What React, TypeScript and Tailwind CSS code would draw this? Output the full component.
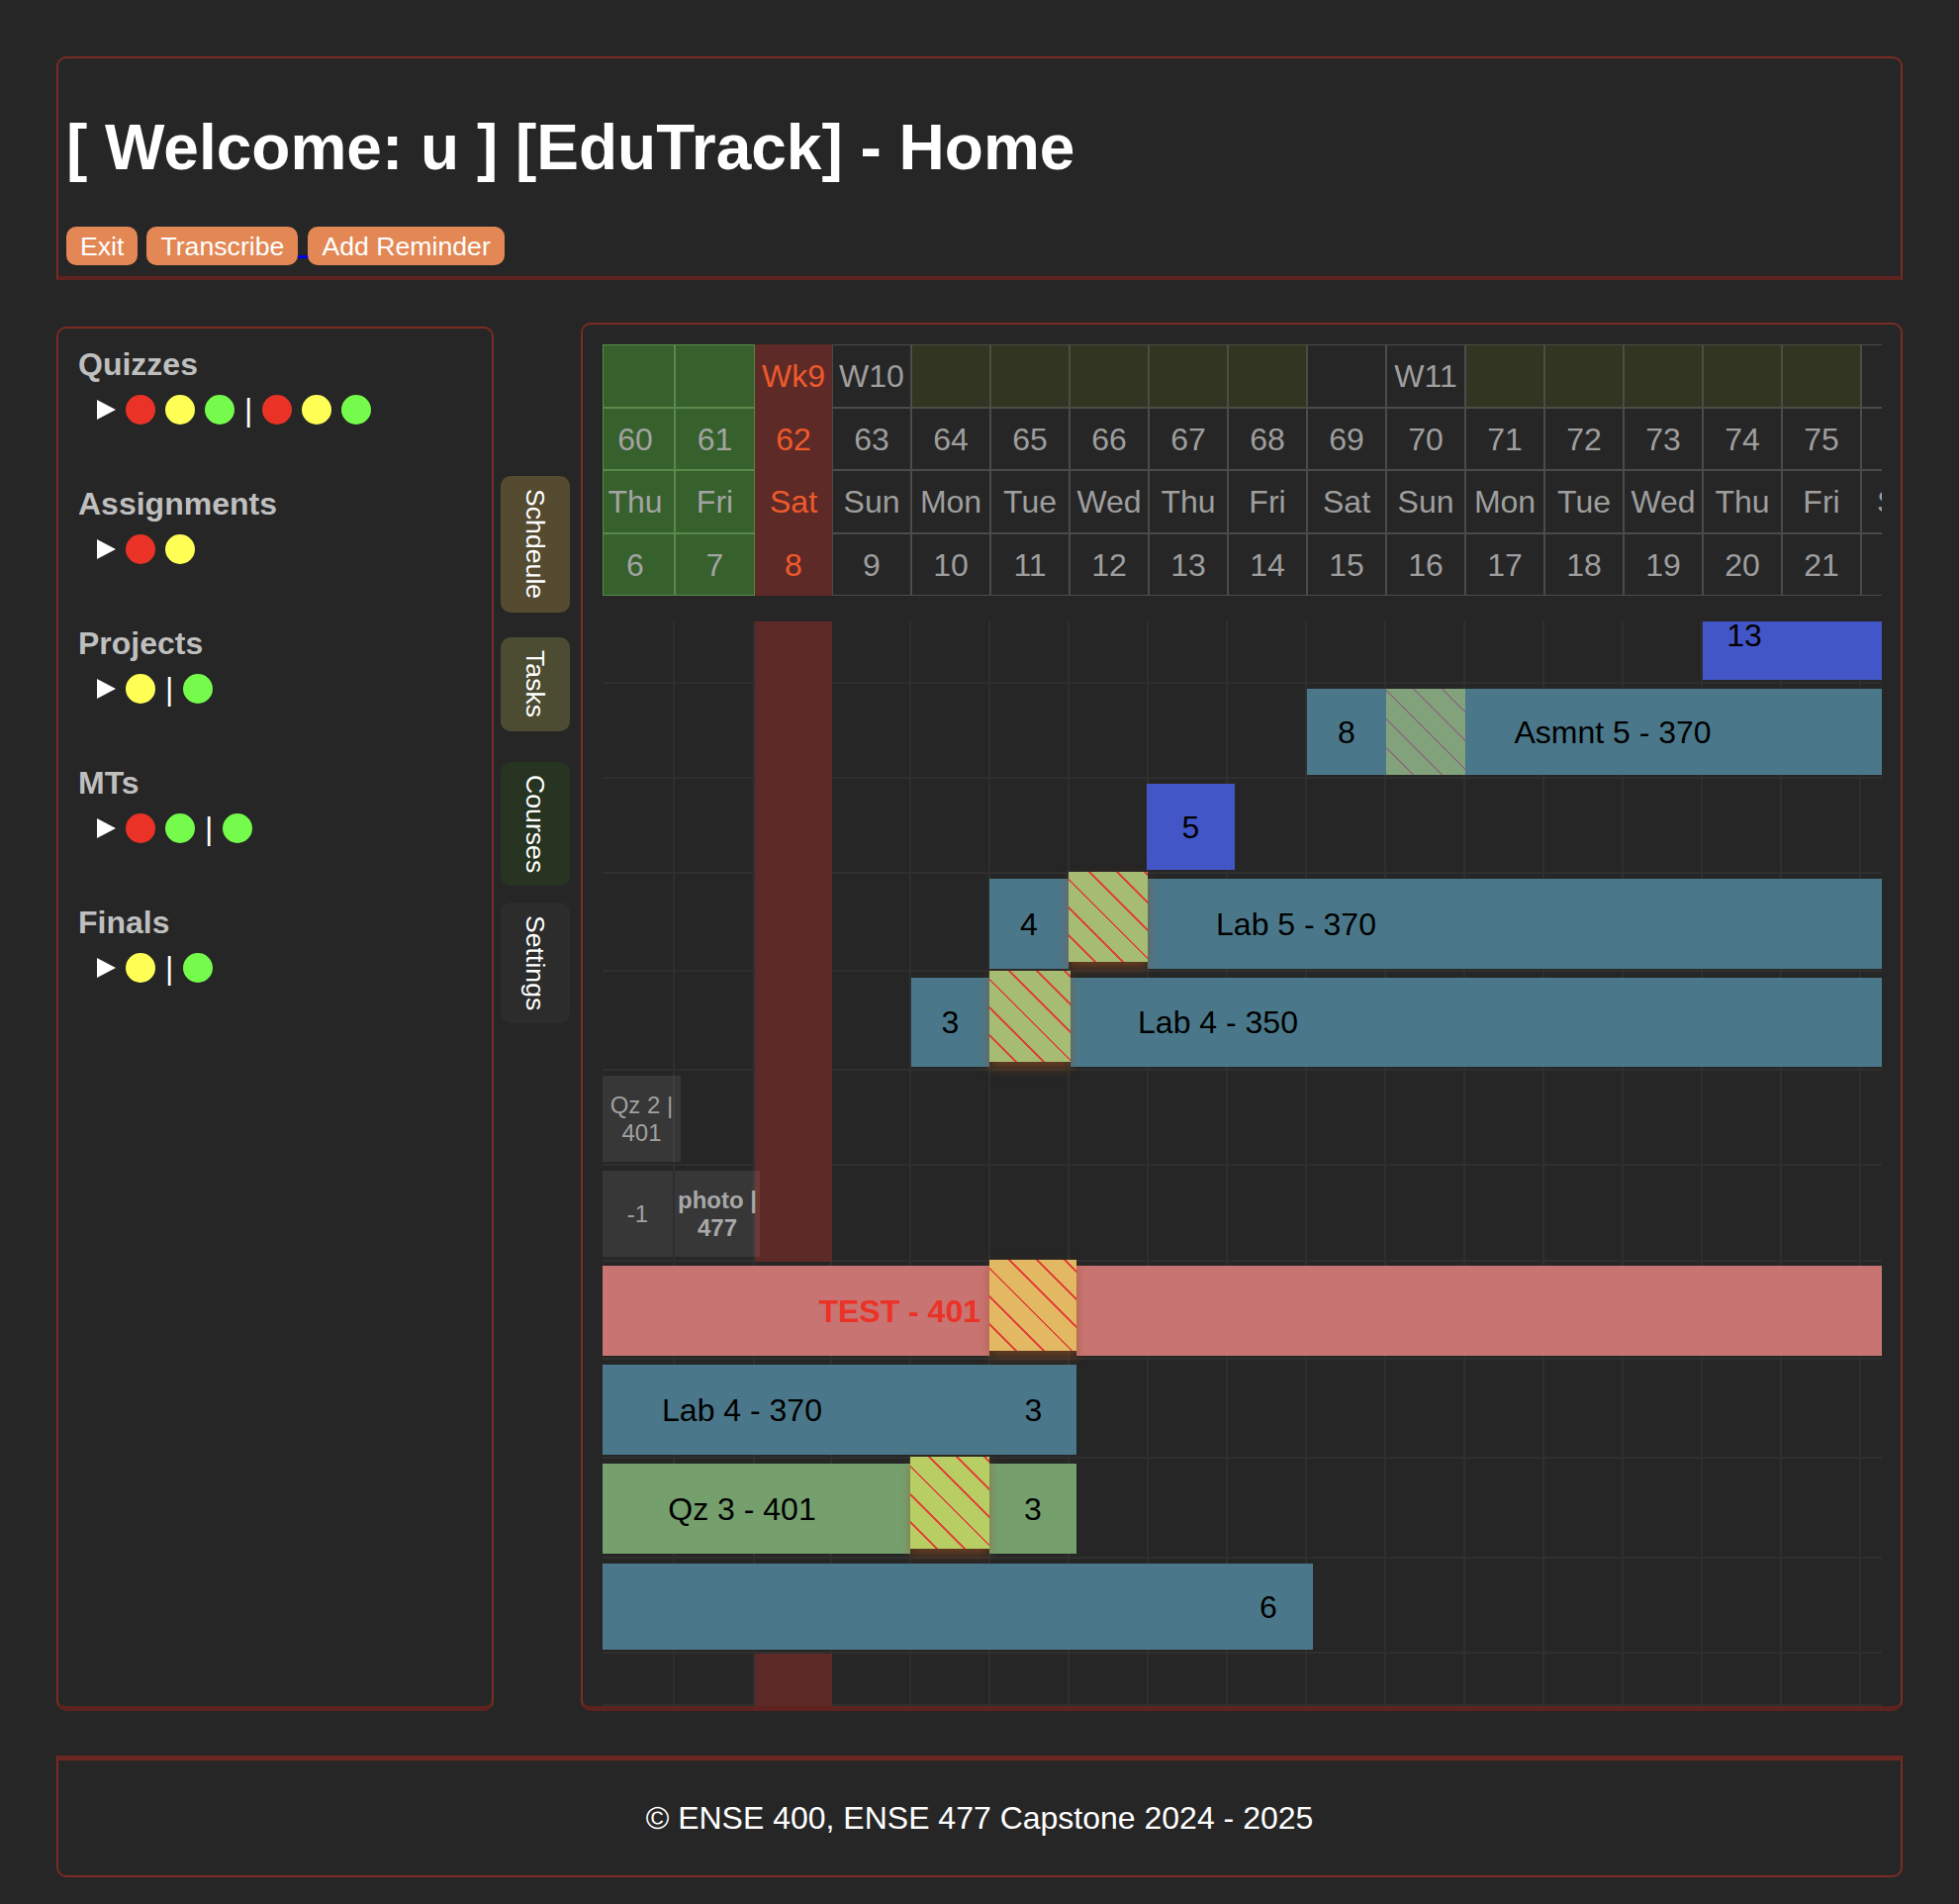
import React from 'react';

type Kind = 'green' | 'red' | 'dark' | 'olive';

// column widths of the calendar strip, first three are a bit off in the original
const COL_W = [
  'w-[73px] pr-[7px]', 'w-[81px]', 'w-[78px]',
  'w-[80px]', 'w-[80px]', 'w-[80px]', 'w-[80px]', 'w-[80px]', 'w-[80px]', 'w-[80px]',
  'w-[80px]', 'w-[80px]', 'w-[80px]', 'w-[80px]', 'w-[80px]', 'w-[80px]', 'w-[80px]',
];

const cellKind: Record<Kind, string> = {
  green: 'bg-[#36602c] border-[#5a8a4b] text-[#a3a3a3]',
  red: 'bg-[#5e2a27] border-[#5e2a27] text-[#ee5a2c]',
  dark: 'bg-[#262626] border-[#4b4b4b] text-[#9e9e9e]',
  olive: 'bg-[#313522] border-[#4c4e40] text-[#9e9e9e]',
};

const weekKinds: Kind[] = ['green', 'green', 'red', 'dark', 'olive', 'olive', 'olive', 'olive', 'olive', 'dark', 'dark', 'olive', 'olive', 'olive', 'olive', 'olive', 'dark'];
const weekText = ['', '', 'Wk9', 'W10', '', '', '', '', '', '', 'W11', '', '', '', '', '', ''];
const dayKinds: Kind[] = ['green', 'green', 'red', 'dark', 'dark', 'dark', 'dark', 'dark', 'dark', 'dark', 'dark', 'dark', 'dark', 'dark', 'dark', 'dark', 'dark'];
const nums = [60, 61, 62, 63, 64, 65, 66, 67, 68, 69, 70, 71, 72, 73, 74, 75, 76];
const days = ['Thu', 'Fri', 'Sat', 'Sun', 'Mon', 'Tue', 'Wed', 'Thu', 'Fri', 'Sat', 'Sun', 'Mon', 'Tue', 'Wed', 'Thu', 'Fri', 'Sat'];
const dates = [6, 7, 8, 9, 10, 11, 12, 13, 14, 15, 16, 17, 18, 19, 20, 21, 22];

const labHatch = 'bg-[repeating-linear-gradient(45deg,#a6bc73_0px,#a6bc73_18px,#d9453b_18px,#d9453b_20px)]';
const asmntHatch = 'bg-[repeating-linear-gradient(45deg,#82a27b_0px,#82a27b_19px,#8a6c7c_19px,#8a6c7c_20.5px)]';
const testHatch = 'bg-[repeating-linear-gradient(45deg,#e3b862_0px,#e3b862_18px,#e2443a_18px,#e2443a_20px)]';
const qzHatch = 'bg-[repeating-linear-gradient(45deg,#b8cd63_0px,#b8cd63_18px,#e0473b_18px,#e0473b_20px)]';
const glow = 'shadow-[0_6px_10px_rgba(160,80,30,0.55)]';

const dotColor = {
  r: 'bg-[#ea3326]',
  y: 'bg-[#ffff55]',
  g: 'bg-[#75fb4c]',
};

const sections: { title: string; marks: ('r' | 'y' | 'g' | '|')[] }[] = [
  { title: 'Quizzes', marks: ['r', 'y', 'g', '|', 'r', 'y', 'g'] },
  { title: 'Assignments', marks: ['r', 'y'] },
  { title: 'Projects', marks: ['y', '|', 'g'] },
  { title: 'MTs', marks: ['r', 'g', '|', 'g'] },
  { title: 'Finals', marks: ['y', '|', 'g'] },
];

function HeadRow({ kinds, values, h }: { kinds: Kind[]; values: (string | number)[]; h: string }) {
  return (
    <div className={`flex ${h}`}>
      {values.map((v, i) => (
        <div
          key={i}
          className={`${COL_W[i]} shrink-0 border-[1.5px] flex items-center justify-center text-[32px] ${cellKind[kinds[i]]}`}
        >
          {v}
        </div>
      ))}
    </div>
  );
}

function GridRow({ h, red, children }: { h: string; red?: boolean; children?: React.ReactNode }) {
  return (
    <div className={`relative ${h}`}>
      <div className="absolute inset-0 flex">
        {COL_W.map((w, i) => (
          <div
            key={i}
            className={`${w} shrink-0 h-full border-r-2 border-b-2 ${
              i === 2 && red ? 'bg-[#5e2a27] border-[#5e2a27]' : 'border-[#2f2f2f]'
            }`}
          />
        ))}
      </div>
      {children}
    </div>
  );
}

const Triangle = () => (
  <svg width="19" height="20" viewBox="0 0 19 20" className="shrink-0">
    <polygon points="0,0 19,10 0,20" fill="#ffffff" />
  </svg>
);

export default function App() {
  return (
    <div className="min-h-[1924px] bg-[#262626] px-[57px] pt-[57px] font-['Liberation_Sans',Arial,sans-serif]">
      {/* header */}
      <header className="h-[226px] border-2 border-b-4 border-[#7a2c24] border-b-[#5e231e] rounded-t-[10px] pl-[8px] pt-[53px]">
        <h1 className="text-[64px] leading-[74px] font-bold text-white">[ Welcome: u ] [EduTrack] - Home</h1>
        <div className="mt-[43px] flex items-center">
          <button className="h-[39px] px-[14px] rounded-[10px] bg-[#e38855] text-white text-[26.67px]">Exit</button>
          <button className="ml-[9px] h-[39px] px-[14px] rounded-[10px] bg-[#e38855] text-white text-[26.67px]">Transcribe</button>
          <span className="w-[10px] h-[39px] flex items-end pb-[7px]">
            <span className="w-full h-[3px] bg-[#0000ee]" />
          </span>
          <button className="h-[39px] px-[14px] rounded-[10px] bg-[#e38855] text-white text-[26.67px]">Add Reminder</button>
        </div>
      </header>

      <div className="mt-[43px] flex h-[1403px]">
        {/* left summary */}
        <aside className="w-[442px] mt-[4px] border-2 border-b-[5px] border-[#7a2c24] border-b-[#5e231e] rounded-[10px] pl-[20px] pt-[18px] flex flex-col gap-[62px]">
          {sections.map((s) => (
            <div key={s.title}>
              <div className="text-[32px] leading-[37px] font-bold text-[#bfbfbf]">{s.title}</div>
              <div className="mt-[12px] ml-[19px] h-[30px] flex items-center gap-[10px]">
                <Triangle />
                {s.marks.map((m, i) =>
                  m === '|' ? (
                    <span key={i} className="text-white text-[32px] leading-none">|</span>
                  ) : (
                    <span key={i} className={`w-[30px] h-[30px] rounded-full ${dotColor[m]}`} />
                  )
                )}
              </div>
            </div>
          ))}
        </aside>

        {/* vertical tabs */}
        <nav className="ml-[7px] mr-[11px] w-[70px] pt-[155px] flex flex-col">
          <button className="h-[138px] rounded-[10px] bg-[#554b31] flex items-center justify-center text-white text-[26.67px]">
            <span className="[writing-mode:vertical-rl]">Schdeule</span>
          </button>
          <button className="mt-[25px] h-[95px] rounded-[10px] bg-[#4b4c31] flex items-center justify-center text-white text-[26.67px]">
            <span className="[writing-mode:vertical-rl]">Tasks</span>
          </button>
          <button className="mt-[31px] h-[125px] rounded-[10px] bg-[#263421] flex items-center justify-center text-white text-[26.67px]">
            <span className="[writing-mode:vertical-rl]">Courses</span>
          </button>
          <button className="mt-[17px] h-[122px] rounded-[10px] bg-[#2c2c2c] flex items-center justify-center text-white text-[26.67px]">
            <span className="[writing-mode:vertical-rl]">Settings</span>
          </button>
        </nav>

        {/* schedule */}
        <main className="w-[1336px] border-2 border-b-[5px] border-[#7a2c24] border-b-[#5e231e] rounded-[10px] pl-[20px] pt-[20px] overflow-hidden">
          <div className="w-[1293px] overflow-hidden">
            <div className="w-[1352px]">
              <HeadRow kinds={weekKinds} values={weekText} h="h-[64px]" />
              <HeadRow kinds={dayKinds} values={nums} h="h-[63px]" />
              <HeadRow kinds={dayKinds} values={days} h="h-[64px]" />
              <HeadRow kinds={dayKinds} values={dates} h="h-[63px]" />

              <div className="mt-[26px] text-[32px] text-black">
                <GridRow h="h-[63px]" red>
                  <div className="absolute left-[1112px] top-0 h-[59px] w-[240px] bg-[#4356c8]">
                    <div className="w-[84px] text-center leading-[28px]">13</div>
                  </div>
                </GridRow>

                <GridRow h="h-[96px]" red>
                  <div className="absolute left-[712px] top-[5px] h-[87px] right-0 flex">
                    <div className="w-[80px] bg-[#4a788a] flex items-center justify-center">8</div>
                    <div className={`w-[80px] ${asmntHatch}`} />
                    <div className="flex-1 bg-[#4a788a] flex items-center">
                      <span className="w-[298px] text-center">Asmnt 5 - 370</span>
                    </div>
                  </div>
                </GridRow>

                <GridRow h="h-[96px]" red>
                  <div className="absolute left-[550px] top-[5px] h-[87px] w-[89px] bg-[#4356c8] flex items-center justify-center">5</div>
                </GridRow>

                <GridRow h="h-[99px]" red>
                  <div className="absolute left-[391px] inset-y-0 right-0 flex items-start">
                    <div className="mt-[5px] h-[91px] w-[80px] bg-[#4a788a] flex items-center justify-center">4</div>
                    <div className={`relative z-10 -mt-[2px] h-[91px] w-[80px] ${labHatch} ${glow}`} />
                    <div className="mt-[5px] h-[91px] flex-1 bg-[#4a788a] flex items-center">
                      <span className="w-[300px] text-center">Lab 5 - 370</span>
                    </div>
                  </div>
                </GridRow>

                <GridRow h="h-[100px]" red>
                  <div className="absolute left-[312px] inset-y-0 right-0 flex items-start">
                    <div className="mt-[6px] h-[90px] w-[79px] bg-[#4a788a] flex items-center justify-center">3</div>
                    <div className={`relative z-10 -mt-[1px] h-[92px] w-[82px] ${labHatch} ${glow}`} />
                    <div className="mt-[6px] h-[90px] flex-1 bg-[#4a788a] flex items-center">
                      <span className="w-[298px] text-center">Lab 4 - 350</span>
                    </div>
                  </div>
                </GridRow>

                <GridRow h="h-[96px]" red>
                  <div className="absolute left-0 top-[5px] h-[87px] w-[79px] bg-white/8 flex flex-col items-center justify-center text-[24px] leading-[28px] text-[#a0a0a0]">
                    <span>Qz 2 |</span>
                    <span>401</span>
                  </div>
                </GridRow>

                <GridRow h="h-[97px]" red>
                  <div className="absolute left-0 top-[5px] h-[87px] w-[71px] bg-white/8 flex items-center justify-center text-[24px] text-[#a0a0a0]">-1</div>
                  <div className="absolute left-[73px] top-[5px] h-[87px] w-[86px] bg-white/8 flex flex-col items-center justify-center text-[24px] leading-[28px] font-bold text-[#a8a8a8]">
                    <span>photo |</span>
                    <span>477</span>
                  </div>
                </GridRow>

                <GridRow h="h-[99px]">
                  <div className="absolute inset-0 flex items-start">
                    <div className="mt-[4px] h-[91px] w-[391px] bg-[#c87472] flex items-center justify-end pr-[9px] font-bold text-[#ea3326]">
                      TEST - 401
                    </div>
                    <div className={`relative z-10 -mt-[2px] h-[92px] w-[88px] ${testHatch} ${glow}`} />
                    <div className="mt-[4px] h-[91px] flex-1 bg-[#c87472]" />
                  </div>
                </GridRow>

                <GridRow h="h-[100px]">
                  <div className="absolute left-0 top-[5px] h-[91px] w-[479px] bg-[#4a788a] flex items-center">
                    <span className="w-[282px] text-center">Lab 4 - 370</span>
                    <span className="ml-auto w-[87px] text-center">3</span>
                  </div>
                </GridRow>

                <GridRow h="h-[101px]">
                  <div className="absolute inset-0 flex items-start">
                    <div className="mt-[5px] h-[91px] w-[311px] bg-[#75a06e] flex items-center">
                      <span className="w-[282px] text-center">Qz 3 - 401</span>
                    </div>
                    <div className={`relative z-10 -mt-[2px] h-[93px] w-[80px] ${qzHatch} ${glow}`} />
                    <div className="mt-[5px] h-[91px] w-[88px] bg-[#75a06e] flex items-center justify-center">3</div>
                  </div>
                </GridRow>

                <GridRow h="h-[96px]">
                  <div className="absolute left-0 top-[5px] h-[87px] w-[718px] bg-[#4a788a] flex items-center">
                    <span className="ml-auto w-[90px] text-center">6</span>
                  </div>
                </GridRow>

                <GridRow h="h-[53px]" red />
              </div>
            </div>
          </div>
        </main>
      </div>

      <footer className="mt-[45px] h-[123px] border-2 border-t-[5px] border-[#7a2c24] border-t-[#6a2620] rounded-b-[10px] flex items-center justify-center text-white text-[32px]">
        © ENSE 400, ENSE 477 Capstone 2024 - 2025
      </footer>
    </div>
  );
}
